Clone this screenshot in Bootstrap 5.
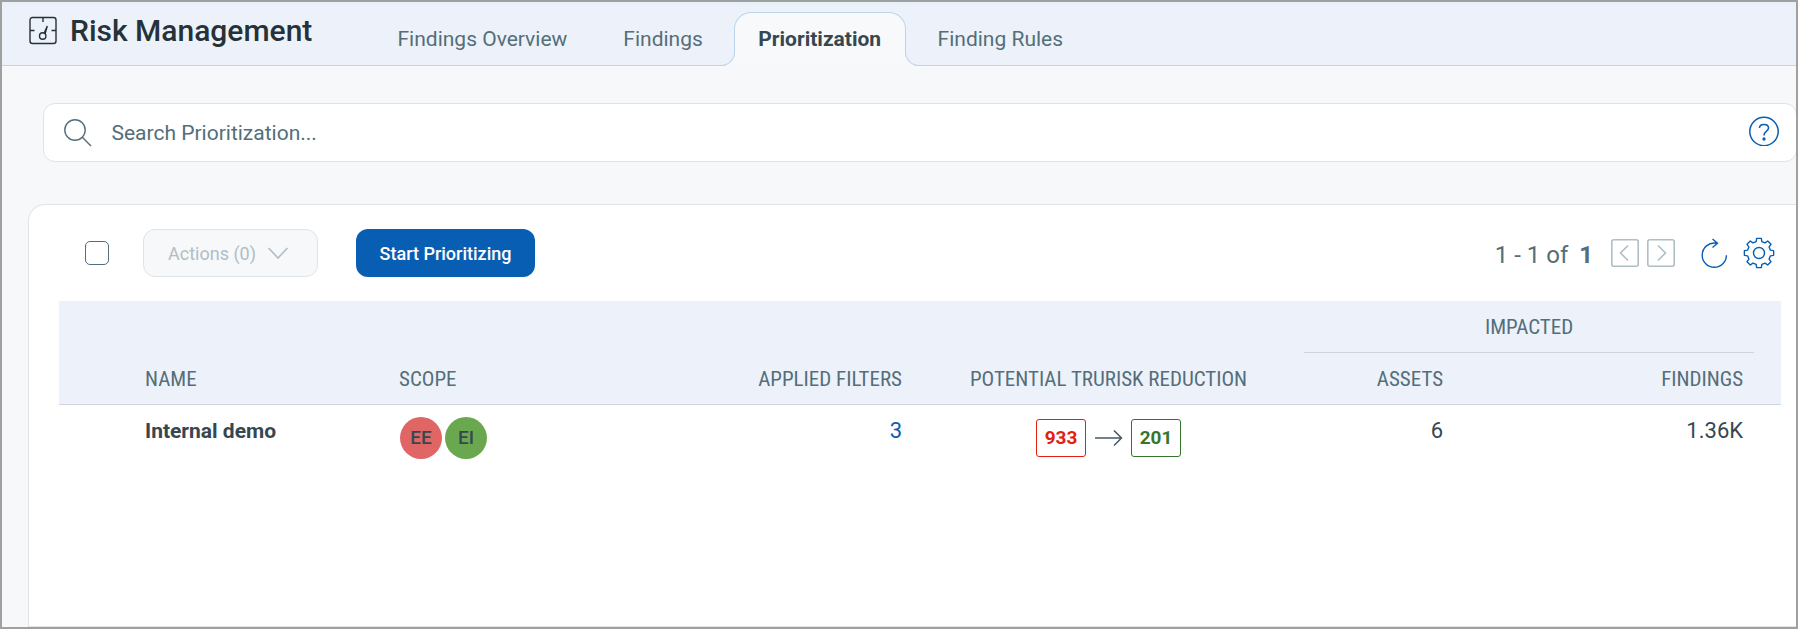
<!DOCTYPE html>
<html lang="en">
<head>
<meta charset="utf-8">
<title>Risk Management</title>
<link href="https://cdn.jsdelivr.net/npm/bootstrap@5.3.0/dist/css/bootstrap.min.css" rel="stylesheet">
<style>
body{font-family:Roboto,"Liberation Sans",sans-serif;background:#f6f8fa;color:#37474f;height:629px;overflow:hidden}
.frame{height:629px;border:2px solid #a0a0a0;overflow:hidden}
.topbar{height:64px;flex:none;background:linear-gradient(#e6f0f8,#edf2fa 6px);border-bottom:1px solid #bcd5ea;padding-left:26px}
.brand-icon{margin-top:14px}
.brand-text{font-size:30px;font-weight:500;line-height:36px;color:#263238;margin:11px 0 0 12px;width:299.500px;white-space:nowrap}
.tabs{height:64px;padding-top:10px}
.tabs a{color:#546e7a;font-size:21px;line-height:54px;padding:0 28px;height:54px;white-space:nowrap;text-decoration:none;border:0 solid #bcd5ea;position:relative}
.tabs a.active{color:#37474f;font-weight:700;background:#f7f9fb;border-width:1px 1px 0;border-radius:17px 17px 0 0;line-height:52px;padding:0 23.500px;margin:0 4px 0 3px}
.tabs a.active::before,.tabs a.active::after{content:"";position:absolute;bottom:0;width:15px;height:15px;border-bottom:1px solid #bcd5ea}
.tabs a.active::before{right:100%;border-right:1px solid #bcd5ea;border-bottom-right-radius:14px;box-shadow:5px 5px 0 4px #f7f9fb;clip-path:inset(0 -1px 0 0)}
.tabs a.active::after{left:100%;border-left:1px solid #bcd5ea;border-bottom-left-radius:14px;box-shadow:-5px 5px 0 4px #f7f9fb;clip-path:inset(0 0 0 -1px)}
.searchbox{flex:none;height:59px;margin:37px -1px 0 41px;border:1px solid #dfe4e8;border-radius:12px;background:#fff;padding:0 17px 0 20px;font-size:21px;color:#546e7a}
.searchbox span{padding-top:2px;margin-left:15.500px}
.panel{margin:42px -2px 0 26px;border:1px solid #dfe4e8;border-right:0;border-radius:17px 0 0 0;background:#fff;padding:24px 17px 0 30px}
.tools{height:48px}
.check{width:24px;height:24px;border:1px solid #546e7a;border-radius:5px;background:#fff;margin:0 34px 0 26px}
.tool-btn{height:48px;border-radius:12px;font-size:18px;line-height:24px;padding:2px 24px 0}
.tool-btn.dim{width:175px;background:#f6f8fa!important;border:1px solid #dfe4e8;color:#b0bec5!important;opacity:1!important}
.tool-btn.dim svg{margin-left:9px}
.tool-btn.go{width:179px;margin-left:38px;background:#085eb3;color:#fff;border:0;font-weight:500;padding:2px 23px 0}
.pager{font-size:24px;color:#546e7a;line-height:30px;padding-right:6px}
.pager .count{padding-top:3px;margin-right:18px}
.pager .count b{margin-left:5px}
.pager .refresh{margin:0 14px 0 26px}
.grid{table-layout:fixed;width:1722px;margin:24px 0 0;border-collapse:separate;border-spacing:0}
.grid th{font-family:"Roboto Condensed",Roboto,sans-serif;font-stretch:75%;font-weight:400;font-size:21px;line-height:26px;color:#546e7a;background:#edf2fa;padding:0 11px;height:52px;white-space:nowrap}
.grid thead tr:first-child th{height:51px}
.grid thead tr:first-child .group{border-bottom:1px solid #cdd6dd;height:52px}
.grid thead tr:last-child th{border-bottom:1px solid #cdd6dd}
.grid td{font-size:22px;line-height:26px;padding:13px 11px 0;vertical-align:top}
.grid td.tight{padding-top:12px}
.grid td.title{font-size:21px;font-weight:700}
.who{width:42px;height:42px;border-radius:50%;font-size:19px;font-weight:500;color:#37474f}
.who.red{background:#e06666}
.who.green{background:#6aa84f}
.score{width:50px;height:38px;border:1px solid;border-radius:3px;font-size:19px;font-weight:700}
.score.high{color:#e2200f}
.score.low{color:#35762f}
.shift{gap:8px;padding-top:2px}
.people{gap:3px;padding-left:1px}
.blue{color:#085eb3!important}
</style>
</head>
<body>
<div class="frame d-flex flex-column">
  <header class="topbar d-flex align-items-start">
    <svg class="brand-icon" width="30" height="30" viewBox="0 0 30 30" fill="none" stroke="#263238" stroke-width="1.4"><rect x="2" y="1.500" width="26" height="26" rx="2.500"/><path d="M15 2v4M2 14.500h4.500M23.500 14.500h4.500M16 17.500L19.300 10M17 18L19.300 10"/><circle cx="14.700" cy="20" r="3.200"/></svg>
    <div class="brand-text">Risk Management</div>
    <nav class="tabs d-flex">
      <a href="#">Findings Overview</a>
      <a href="#">Findings</a>
      <a href="#" class="active">Prioritization</a>
      <a href="#">Finding Rules</a>
    </nav>
  </header>
  <div class="searchbox d-flex align-items-center">
    <svg width="28" height="28" viewBox="0 0 28 28" fill="none" stroke="#546e7a" stroke-width="1.400"><circle cx="11" cy="11" r="10.200"/><path d="M18.300 18.300L27 27"/></svg>
    <span class="me-auto ps-1">Search Prioritization...</span>
    <svg class="mb-1" width="30" height="30" viewBox="0 0 30 30" fill="none" stroke="#085eb3" stroke-width="1.500"><circle cx="15" cy="15.500" r="14.200"/><path d="M10.500 12C10.500 7.300 19.500 7.300 19.500 12C19.500 15.500 15 14.800 15 19.500"/><circle cx="15" cy="23" r=".9" fill="#085eb3"/></svg>
  </div>
  <main class="panel flex-grow-1">
    <div class="tools d-flex align-items-center">
      <span class="check" role="checkbox" aria-checked="false"></span>
      <button class="tool-btn btn dim d-flex align-items-center" disabled>Actions (0)<svg class="flex-shrink-0" width="26" height="14" viewBox="0 0 26 14" fill="none" stroke="#b0bec5" stroke-width="1.600"><path d="M3.500 1L13 11L22.500 1"/></svg></button>
      <button class="tool-btn btn go text-nowrap">Start Prioritizing</button>
      <div class="pager ms-auto d-flex align-items-center">
        <span class="count">1 - 1 of <b>1</b></span>
        <svg width="64" height="28" viewBox="0 0 64 28" fill="none" stroke="#b0bec5" stroke-width="1.600"><rect x=".8" y=".8" width="26.400" height="26.400" rx="2"/><rect x="36.800" y=".8" width="26.400" height="26.400" rx="2"/><path d="M17 6.500L9.500 14l7.500 7.500M47 6.500l7.500 7.500l-7.500 7.500"/></svg>
        <svg class="refresh" width="28" height="32" viewBox="0 0 28 32" fill="none" stroke="#085eb3" stroke-width="1.400"><path d="M16.500 6.300C7.500 4.500 1.200 11 1.200 18.200A12.100 12.100 0 0 0 25.400 18.200M11.500 2L16.500 6.300L11.500 10.500"/></svg>
        <svg width="32" height="32" viewBox="0 0 32 32" fill="none" stroke="#085eb3" stroke-width="1.400" stroke-linejoin="round"><circle cx="16" cy="16" r="5.500"/><path id="gear"/></svg>
      </div>
    </div>
    <table class="grid">
      <colgroup><col style="width:75px"><col style="width:254px"><col style="width:252px"><col style="width:273px"><col style="width:391px"><col style="width:150px"><col style="width:300px"><col style="width:27px"></colgroup>
      <thead>
        <tr><th colspan="5"></th><th colspan="2" class="group text-center">IMPACTED</th><th></th></tr>
        <tr><th></th><th>NAME</th><th>SCOPE</th><th class="text-end">APPLIED FILTERS</th><th class="text-center">POTENTIAL TRURISK REDUCTION</th><th class="text-end">ASSETS</th><th class="text-end">FINDINGS</th><th></th></tr>
      </thead>
      <tbody>
        <tr><td></td><td class="title">Internal demo</td>
        <td class="tight"><div class="people d-flex"><span class="who red d-flex align-items-center justify-content-center">EE</span><span class="who green d-flex align-items-center justify-content-center">EI</span></div></td>
        <td class="text-end blue">3</td>
        <td class="tight"><div class="shift d-flex align-items-center justify-content-center"><span class="score high d-flex align-items-center justify-content-center">933</span><svg width="29" height="18" viewBox="0 0 29 18" fill="none" stroke="#455a64" stroke-width="1.500"><path d="M1 9h26M20 1.500L27.500 9L20 16.500"/></svg><span class="score low d-flex align-items-center justify-content-center">201</span></div></td>
        <td class="text-end">6</td><td class="text-end">1.36K</td><td></td></tr>
      </tbody>
    </table>
  </main>
</div>
<script src="https://cdn.jsdelivr.net/npm/bootstrap@5.3.0/dist/js/bootstrap.bundle.min.js"></script>
<script>
// gear outline: eight teeth around the hub
let d='';
for(let i=0;i<8;i++){const a=i*45;[[11.8,-14],[14.8,-9],[14.8,9],[11.8,14]].forEach(([r,o],k)=>{const t=(a+o)*Math.PI/180;d+=(i||k?'L':'M')+(16+r*Math.cos(t)).toFixed(2)+' '+(16+r*Math.sin(t)).toFixed(2)})}
document.getElementById('gear').setAttribute('d',d+'Z');
</script>
</body>
</html>
